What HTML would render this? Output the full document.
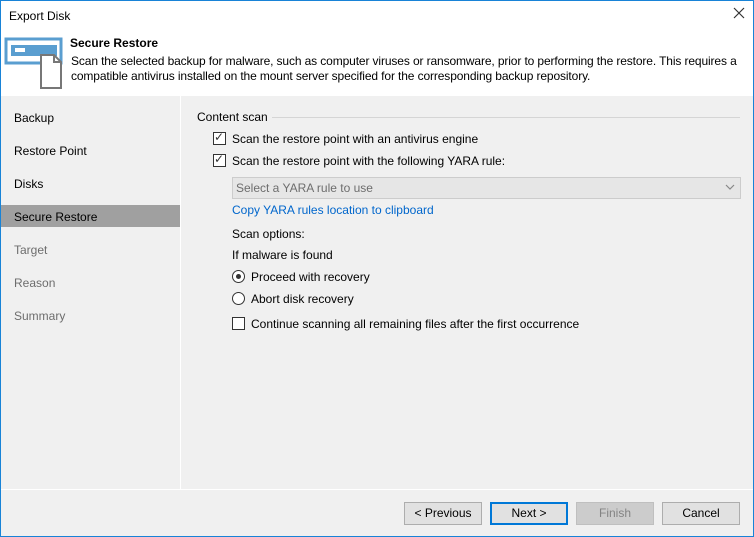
<!DOCTYPE html><html><head><style>
*{margin:0;padding:0;box-sizing:border-box}
body{width:754px;height:537px;overflow:hidden;font-family:"Liberation Sans",sans-serif;font-size:12px;color:#000;background:#f0f0f0;position:relative}
.win{position:absolute;left:0;top:0;width:754px;height:537px;border:1px solid #1883d7}
.abs{position:absolute;white-space:nowrap}
.cb{position:absolute;width:13px;height:13px;border:1px solid #333;background:#fff}
.rb{position:absolute;width:13px;height:13px;border:1px solid #333;border-radius:50%;background:#fff}
.btn{position:absolute;top:501px;height:23px;width:78px;border:1px solid #adadad;background:#e1e1e1;text-align:center;line-height:21px}
</style></head><body><div class="win">
<div class="abs" style="left:0;top:0;width:752px;height:95px;background:#fff"></div>
<div class="abs" style="left:8px;top:8px">Export Disk</div>
<svg class="abs" style="left:732px;top:6px" width="12" height="12"><path d="M1 1L11 11M11 1L1 11" stroke="#333" stroke-width="1.2"/></svg>
<svg class="abs" style="left:3px;top:36px" width="60" height="54"><rect x="2" y="2" width="55" height="24" fill="#fff" stroke="#5a9ed0" stroke-width="3"/><rect x="7" y="8" width="46" height="11" fill="#5a9ed0"/><rect x="11" y="11" width="10" height="4" fill="#fff"/><path d="M37 18H50L57 25V51H37Z" fill="#fff" stroke="#777" stroke-width="2"/><path d="M50 18V25H57" fill="none" stroke="#777" stroke-width="2"/></svg>
<div class="abs" style="left:69px;top:35px;font-weight:bold">Secure Restore</div>
<div class="abs" style="left:70px;top:53px;line-height:15px;letter-spacing:-0.12px">Scan the selected backup for malware, such as computer viruses or ransomware, prior to performing the restore. This requires a<br>compatible antivirus installed on the mount server specified for the corresponding backup repository.</div>
<div class="abs" style="left:179px;top:95px;width:1px;height:393px;background:#fff"></div>
<div class="abs" style="left:0;top:204px;width:179px;height:22px;background:#a0a0a0"></div>
<div class="abs" style="left:13px;top:110px">Backup</div>
<div class="abs" style="left:13px;top:143px">Restore Point</div>
<div class="abs" style="left:13px;top:176px">Disks</div>
<div class="abs" style="left:13px;top:209px">Secure Restore</div>
<div class="abs" style="left:13px;top:242px;color:#6d6d6d">Target</div>
<div class="abs" style="left:13px;top:275px;color:#6d6d6d">Reason</div>
<div class="abs" style="left:13px;top:308px;color:#6d6d6d">Summary</div>
<div class="abs" style="left:196px;top:109px">Content scan</div>
<div class="abs" style="left:271px;top:116px;width:468px;height:1px;background:#d5d5d5"></div>
<div class="cb" style="left:212px;top:131px"></div><div class="abs" style="left:213px;top:129px;font-size:12px;color:#333">✓</div>
<div class="abs" style="left:231px;top:131px">Scan the restore point with an antivirus engine</div>
<div class="cb" style="left:212px;top:153px"></div><div class="abs" style="left:213px;top:151px;font-size:12px;color:#333">✓</div>
<div class="abs" style="left:231px;top:153px">Scan the restore point with the following YARA rule:</div>
<div class="abs" style="left:231px;top:176px;width:509px;height:22px;border:1px solid #ccc;background:#e6e6e6"></div>
<div class="abs" style="left:235px;top:180px;color:#6d6d6d">Select a YARA rule to use</div>
<svg class="abs" style="left:724px;top:183px" width="10" height="6"><path d="M1 1L5 5L9 1" fill="none" stroke="#888" stroke-width="1.2"/></svg>
<div class="abs" style="left:231px;top:202px;color:#0066cc">Copy YARA rules location to clipboard</div>
<div class="abs" style="left:231px;top:226px">Scan options:</div>
<div class="abs" style="left:231px;top:247px">If malware is found</div>
<div class="rb" style="left:231px;top:269px"></div><div class="abs" style="left:235px;top:273px;width:5px;height:5px;border-radius:50%;background:#333"></div>
<div class="abs" style="left:250px;top:269px">Proceed with recovery</div>
<div class="rb" style="left:231px;top:291px"></div>
<div class="abs" style="left:250px;top:291px">Abort disk recovery</div>
<div class="cb" style="left:231px;top:316px"></div>
<div class="abs" style="left:250px;top:316px">Continue scanning all remaining files after the first occurrence</div>
<div class="abs" style="left:0;top:488px;width:752px;height:1px;background:#fff"></div>
<div class="btn" style="left:403px">&lt; Previous</div>
<div class="btn" style="left:489px;border:2px solid #0078d7;line-height:19px">Next &gt;</div>
<div class="btn" style="left:575px;background:#ccc;border-color:#bfbfbf;color:#838383">Finish</div>
<div class="btn" style="left:661px">Cancel</div>
</div></body></html>
